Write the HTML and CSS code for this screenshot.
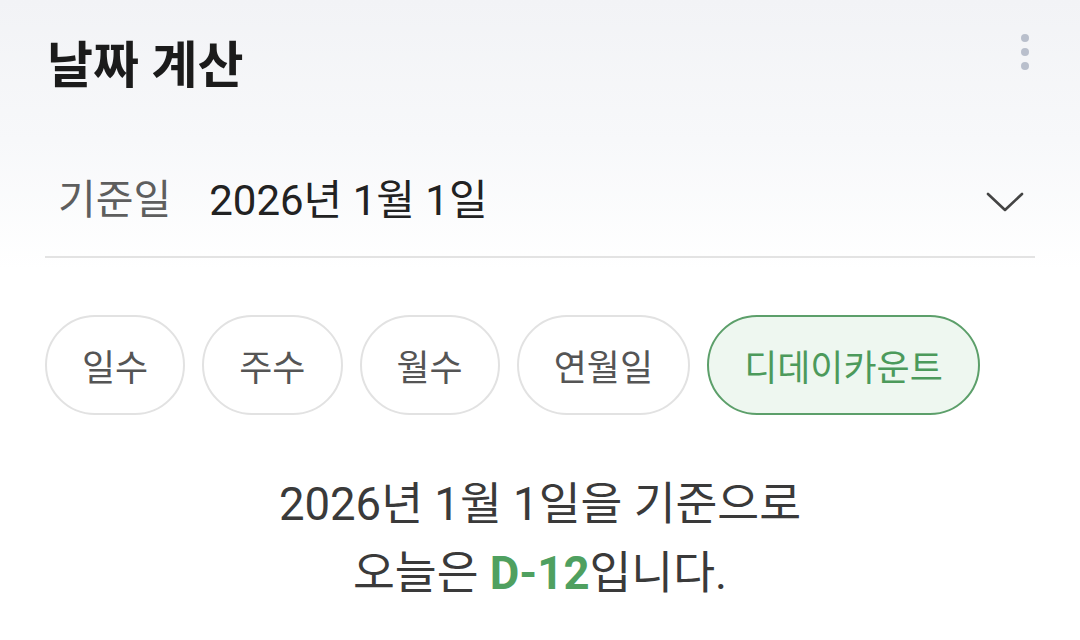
FILE: index.html
```html
<!DOCTYPE html>
<html lang="ko">
<head>
<meta charset="utf-8">
<title>날짜 계산</title>
<link rel="stylesheet" href="styles.css">
</head>
<body>
<div class="page">
  <header class="header">
    <h1 class="title">날짜 계산</h1>
    <button class="more" aria-label="더보기">
      <span class="dot"></span><span class="dot"></span><span class="dot"></span>
    </button>
  </header>
  <div class="date-row">
    <span class="label">기준일</span>
    <span class="value">2026년 1월 1일</span>
    <svg class="chevron" width="40" height="24" viewBox="0 0 40 24" aria-hidden="true">
      <path d="M3 4 L20 20 L37 4" fill="none" stroke="#444" stroke-width="2.6" stroke-linecap="round" stroke-linejoin="round"/>
    </svg>
  </div>
  <div class="chips">
    <span class="chip">일수</span>
    <span class="chip">주수</span>
    <span class="chip">월수</span>
    <span class="chip">연월일</span>
    <span class="chip active">디데이카운트</span>
  </div>
  <div class="result">
    <p class="line">2026년 1월 1일을 기준으로</p>
    <p class="line">오늘은 <strong class="dday">D-12</strong>입니다.</p>
  </div>
</div>
</body>
</html>
```
FILE: styles.css
```css
html, body {
  margin: 0;
  padding: 0;
}
body {
  width: 1080px;
  height: 640px;
  overflow: hidden;
  background: linear-gradient(to bottom, #f2f3f6 0px, #f7f8fa 140px, #ffffff 270px, #ffffff 100%);
  font-family: Roboto, "Noto Sans CJK KR", sans-serif;
  color: #222;
}
.page {
  padding: 0 45px;
}
.header {
  height: 132px;
  display: flex;
  align-items: center;
  justify-content: space-between;
}
.title {
  margin: 0 0 0 2px;
  font-size: 50px;
  font-weight: 700;
  color: #1b1b1b;
  line-height: 1;
}
.more {
  border: 0;
  background: none;
  padding: 0;
  margin: 0 6px 0 0;
  display: flex;
  flex-direction: column;
  gap: 6px;
  align-self: flex-start;
  margin-top: 34px;
}
.dot {
  width: 8px;
  height: 8px;
  border-radius: 50%;
  background: #b9bfcc;
}
.date-row {
  height: 120px;
  padding-top: 4px;
  display: flex;
  align-items: center;
  border-bottom: 2px solid #e3e3e3;
  padding-left: 13px;
  padding-right: 10px;
}
.label {
  font-size: 41px;
  color: #5e5e5e;
  margin-right: 38px;
}
.value {
  font-size: 42px;
  color: #222;
  flex: 1;
}
.chevron {
  display: block;
  margin-top: 12px;
}
.chips {
  margin-top: 57px;
  display: flex;
  gap: 17px;
}
.chip {
  height: 96px;
  border: 2px solid #e2e2e2;
  border-radius: 50px;
  padding: 0 35px;
  display: flex;
  align-items: center;
  font-size: 36px;
  color: #555;
  background: #fff;
}
.chip.active {
  border-color: #5c9f6a;
  background: #eef7f0;
  color: #4c9a5b;
}
.result {
  margin-top: 55px;
  text-align: center;
}
.line {
  margin: 0;
  font-size: 45.5px;
  line-height: 69px;
  color: #3a3a3a;
}
.dday {
  color: #4fa060;
  font-weight: 700;
}
```
